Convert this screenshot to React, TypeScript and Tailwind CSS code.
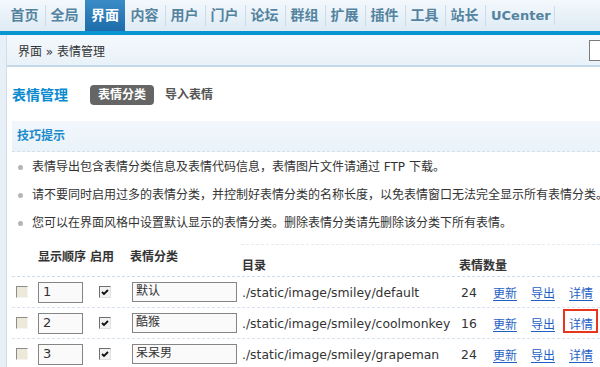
import React from 'react';

const navItems = ['首页', '全局', '界面', '内容', '用户', '门户', '论坛', '群组', '扩展', '插件', '工具', '站长'];

const tips = [
  '表情导出包含表情分类信息及表情代码信息，表情图片文件请通过 FTP 下载。',
  '请不要同时启用过多的表情分类，并控制好表情分类的名称长度，以免表情窗口无法完全显示所有表情分类。',
  '您可以在界面风格中设置默认显示的表情分类。删除表情分类请先删除该分类下所有表情。',
];

const rows = [
  { order: '1', name: '默认', dir: './static/image/smiley/default', count: 24 },
  { order: '2', name: '酷猴', dir: './static/image/smiley/coolmonkey', count: 16, mark: true },
  { order: '3', name: '呆呆男', dir: './static/image/smiley/grapeman', count: 24 },
];

const DisabledBox = () => (
  <div className="w-[12px] h-[12px] bg-[#ece9d8] border-t border-l border-t-[#8c8c8c] border-l-[#8c8c8c] border-b border-r border-b-[#f4f4f4] border-r-[#f4f4f4]" />
);

const CheckedBox = () => (
  <div className="w-[12px] h-[12px] bg-[#f2f2f2] border-t border-l border-t-[#6f6f6f] border-l-[#6f6f6f] border-b border-r border-b-[#e0e0e0] border-r-[#e0e0e0] flex items-center justify-center">
    <svg width="8" height="7" viewBox="0 0 8 7">
      <path d="M1 3 L3 5 L7 1" stroke="#111" strokeWidth="1.8" fill="none" />
    </svg>
  </div>
);

const Link = ({ children }: { children: React.ReactNode }) => (
  <span className="text-[#1f5fc4] underline underline-offset-2">{children}</span>
);

export default function App() {
  return (
    <div className="w-[600px] h-[367px] overflow-hidden bg-white text-[12px] text-[#333] font-['DejaVu_Sans','Noto_Sans_CJK_SC',sans-serif]">
      {/* top nav */}
      <div className="h-[31px] flex bg-gradient-to-b from-[#f3f8fc] to-[#dfebf5] pl-[5px]">
        {navItems.map((item) => (
          <div
            key={item}
            className={`w-[40px] flex items-center justify-center text-[14px] font-bold ${
              item === '界面'
                ? 'bg-gradient-to-b from-[#3b8cc6] to-[#1d6cab] text-white'
                : 'text-[#54839f]'
            }`}
          >
            <span className={item === '界面' ? '' : 'border-r border-[#cbdbe7] pr-[6px] mr-[-6px]'}>{item}</span>
          </div>
        ))}
        <div className="flex items-center text-[13px] font-bold text-[#54839f] pl-[6px]">
          <span className="border-r border-[#cbdbe7] pr-[3px]">UCenter</span>
        </div>
      </div>
      <div className="h-[4px] bg-[#0995cf]" />

      <div className="flex h-full">
        <div className="w-[7px] shrink-0 bg-[#e8f0f7] border-r border-[#cfdeeb]" />
        <div className="flex-1 min-w-0">
          {/* breadcrumb */}
          <div className="h-[32px] flex items-center bg-gradient-to-b from-[#f4f8fc] to-[#e9f2f9] border-b-2 border-[#c6d9e8] pl-[11px]">
            <span className="text-[#333] pt-[4px]">界面 » 表情管理</span>
            <div className="ml-auto w-[11px] h-[21px] border-l border-t border-b border-[#7b7b7b] bg-white" />
          </div>

          {/* heading */}
          <div className="flex items-center h-[20px] mt-[18px] pl-[5px]">
            <span className="text-[14px] font-bold text-[#0b8bcf]">表情管理</span>
            <span className="ml-[22px] h-[20px] px-[8px] rounded-[4px] bg-[#656565] text-white font-bold flex items-center">表情分类</span>
            <span className="ml-[11px] font-bold text-[#555]">导入表情</span>
          </div>

          {/* tips */}
          <div className="ml-[5px] mt-[16px] h-[31px] flex items-center pl-[5px] bg-gradient-to-b from-[#f2f7fc] to-[#eaf3fa] border-b border-dashed border-[#d3dfe9]">
            <span className="font-bold text-[#1c8bcb]">技巧提示</span>
          </div>
          <div className="pt-[1px]">
            {tips.map((t) => (
              <div key={t} className="h-[28px] flex items-center pl-[11px] whitespace-nowrap">
                <span className="w-[5px] h-[5px] rounded-full bg-[#b5b5b5] shrink-0" />
                <span className="ml-[9px]">{t}</span>
              </div>
            ))}
          </div>

          {/* table */}
          <div className="ml-[5px] mt-[7px]">
            <div className="h-[33px] flex font-bold border-b border-dashed border-[#d0dde9]">
              <div className="w-[24px] shrink-0" />
              <div className="w-[54px] shrink-0 pl-[2px] pt-[4px]">显示顺序</div>
              <div className="w-[40px] shrink-0 pt-[4px]">启用</div>
              <div className="w-[111px] shrink-0 pt-[4px]">表情分类</div>
              <div className="flex-1 flex pt-[12px] border-t border-dashed border-[#e3ebf2]">
                <div className="w-[218px] shrink-0 pl-[1px]">目录</div>
                <div className="whitespace-nowrap">表情数量</div>
              </div>
            </div>
            {rows.map((r) => (
              <div key={r.order} className="h-[31px] flex items-center border-b border-dashed border-[#d7e2ec]">
                <div className="w-[24px] shrink-0 pl-[4px]">
                  <DisabledBox />
                </div>
                <div className="w-[54px] shrink-0 pl-[2px]">
                  <div className="w-[45px] h-[21px] border border-[#858585] bg-[#fafafa] flex items-center pl-[4px] text-[13px]">{r.order}</div>
                </div>
                <div className="w-[40px] shrink-0 pl-[9px]">
                  <CheckedBox />
                </div>
                <div className="w-[111px] shrink-0 pl-[2px]">
                  <div className="w-[105px] h-[20px] border border-[#858585] bg-[#fafafa] pl-[3px] leading-[16px]">{r.name}</div>
                </div>
                <div className="w-[219px] shrink-0 pl-[1px] pt-[3px] whitespace-nowrap text-[12.4px]">{r.dir}</div>
                <div className="w-[32px] shrink-0 pl-[1px] pt-[3px] text-[12.4px]">{r.count}</div>
                <div className="w-[38px] shrink-0 pl-[1px] pt-[3px]"><Link>更新</Link></div>
                <div className="w-[38px] shrink-0 pl-[1px] pt-[3px]"><Link>导出</Link></div>
                <div className="relative pl-[1px] pt-[3px]">
                  <Link>详情</Link>
                  {r.mark && (
                    <div className="absolute left-[-5px] top-[-4px] w-[35px] h-[24px] border-2 border-[#e8351d]" />
                  )}
                </div>
              </div>
            ))}
          </div>
        </div>
      </div>
    </div>
  );
}
